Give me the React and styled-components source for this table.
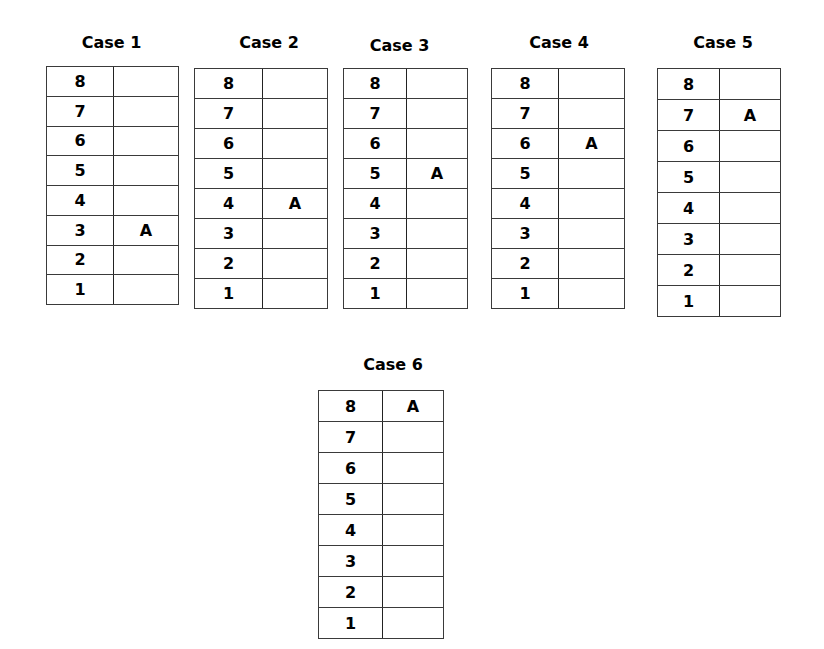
import React from 'react';
import styled, { createGlobalStyle } from 'styled-components';

const GlobalStyle = createGlobalStyle`
  body {
    margin: 0;
    background: #ffffff;
    font-family: "DejaVu Sans", Verdana, sans-serif;
    color: #000000;
  }
`;

const Page = styled.div`
  width: 824px;
  height: 649px;
  box-sizing: border-box;
  padding-top: 33px;
`;

const TopRow = styled.div`
  display: flex;
  align-items: flex-start;
  padding-left: 46px;
`;

const BottomRow = styled.div`
  display: flex;
  margin-top: 38px;
  padding-left: 318px;
`;

const Figure = styled.div`
  display: flex;
  flex-direction: column;
  width: ${props => props.$width}px;
  margin-left: ${props => props.$left || 0}px;
  margin-top: ${props => props.$top || 0}px;
`;

const Title = styled.div`
  height: 20px;
  line-height: 20px;
  font-size: 16px;
  font-weight: bold;
  text-align: center;
  white-space: nowrap;
  margin-bottom: ${props => props.$gap}px;
  padding-left: ${props => Math.max(0, props.$shift * 2)}px;
  padding-right: ${props => Math.max(0, -props.$shift * 2)}px;
`;

const Table = styled.div`
  display: flex;
  flex-direction: column;
  border: 1px solid #3a3a3a;
`;

const Row = styled.div`
  display: flex;
  height: ${props => props.$h}px;
  & + & {
    border-top: 1px solid #3a3a3a;
  }
`;

const Cell = styled.div`
  display: flex;
  align-items: center;
  justify-content: center;
  font-size: 16px;
  font-weight: bold;
  width: ${props => props.$w}px;
  flex: ${props => (props.$w ? 'none' : '1')};
  & + & {
    border-left: 1px solid #222222;
  }
`;

const cases = [
  { n: 1, a: 3, w: 133, split: 66, h: 28.75, gap: 13, shift: -1, left: 0, top: 0 },
  { n: 2, a: 4, w: 134, split: 67, h: 29, gap: 15, shift: 8, left: 15, top: 0 },
  { n: 3, a: 5, w: 125, split: 62, h: 29, gap: 12, shift: -6, left: 15, top: 3 },
  { n: 4, a: 6, w: 134, split: 66, h: 29, gap: 15, shift: 1, left: 23, top: 0 },
  { n: 5, a: 7, w: 124, split: 61, h: 30, gap: 15, shift: 4, left: 32, top: 0 },
];

const sixth = { n: 6, a: 8, w: 126, split: 63, h: 30, gap: 15, shift: 12 };

const CaseTable = ({ c }) => (
  <Figure $width={c.w} $left={c.left} $top={c.top}>
    <Title $gap={c.gap} $shift={c.shift}>Case {c.n}</Title>
    <Table>
      {[8, 7, 6, 5, 4, 3, 2, 1].map(level => (
        <Row key={level} $h={c.h}>
          <Cell $w={c.split}>{level}</Cell>
          <Cell>{level === c.a ? 'A' : ''}</Cell>
        </Row>
      ))}
    </Table>
  </Figure>
);

export default function App() {
  return (
    <>
      <GlobalStyle />
      <Page>
        <TopRow>
          {cases.map(c => (
            <CaseTable key={c.n} c={c} />
          ))}
        </TopRow>
        <BottomRow>
          <CaseTable c={sixth} />
        </BottomRow>
      </Page>
    </>
  );
}
